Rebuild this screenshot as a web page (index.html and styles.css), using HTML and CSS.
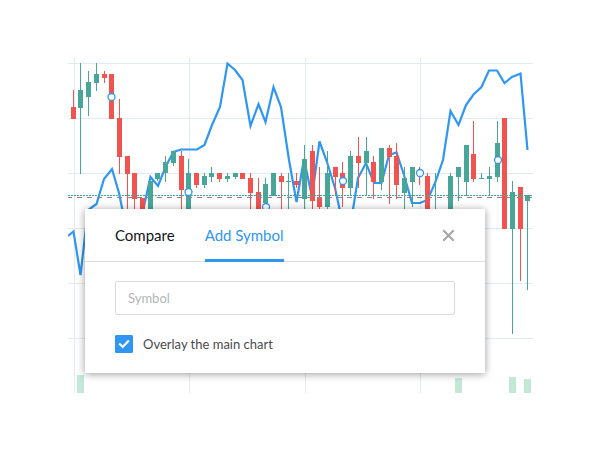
FILE: index.html
```
<!DOCTYPE html>
<html lang="en">
<head>
<meta charset="utf-8">
<meta name="viewport" content="width=device-width, initial-scale=1">
<title>Add Symbol</title>
<link rel="stylesheet" href="styles.css">
</head>
<body>
<main class="stage">
  <svg class="chart" viewBox="68 57 465 336" aria-hidden="true">
    <path class="grid" d="M68 63.5H533M68 118.5H533M68 173.5H533M68 228.5H533M68 283.5H533M68 338.5H533M74.5 58V393M189.5 58V393M305.5 58V393M420.5 58V393"/>
    <path class="volume" d="M77 375h7v18h-7zM455 378h7v15h-7zM509 377h7v16h-7zM524 379h7v14h-7z"/>
    <polyline class="compare-line" points="68,236 73.5,231.5 80.5,275 88,210 96.5,204 104,179 112,169 119,193 127,232 142,215 150.5,177 158,186 166,166 173.5,152 181,149.5 197,149.5 204.5,145 212,125 220,107 227.5,63.5 235,70 242.5,80 250.5,126 258.5,104 265.5,122 273.5,87 281,107 289,160 296.5,202 304,159 312,197 319.5,141.5 327,162 335,188 343,225 350.5,225 358,178 366,163 374,183 381.5,183 389,155 396.5,152.5 404,175 412,203 420,203 427.5,200 435,183 443,160 450.5,111 458.5,125 466,105 473.5,94.5 481.5,87 489,70.5 497,70.5 504.5,83 512,77 520.5,73.5 527.5,150"/>
    <g id="candles"></g>
    <path class="price-dots" d="M68 195.5H533"/>
    <path class="price-dashes" d="M67 197.5H533"/>
    <g class="markers">
      <circle cx="111.5" cy="97" r="3.5"/>
      <circle cx="188.5" cy="192" r="3.5"/>
      <circle cx="266" cy="207" r="3.5"/>
      <circle cx="343" cy="181" r="3.5"/>
      <circle cx="420" cy="173" r="3.5"/>
      <circle cx="498" cy="160" r="3.5"/>
    </g>
  </svg>

  <section class="dialog" role="dialog" aria-label="Add Symbol">
    <header class="dialog-header">
      <nav class="tabs">
        <button class="tab" type="button">Compare</button>
        <button class="tab tab-active" type="button">Add Symbol</button>
      </nav>
      <button class="close" type="button" aria-label="Close">
        <svg width="13" height="13" viewBox="0 0 13 13"><path d="M1.2 1.2l10.6 10.6M11.8 1.2L1.2 11.8"/></svg>
      </button>
    </header>
    <form class="dialog-body">
      <input class="symbol-input" type="text" placeholder="Symbol" aria-label="Symbol">
      <label class="option">
        <input class="checkbox" type="checkbox" checked>
        <svg class="tick" width="18" height="18" viewBox="0 0 18 18"><path d="M4.2 8.5l3.5 3.5 6.2-6.5"/></svg>
        <span>Overlay the main chart</span>
      </label>
    </form>
  </section>
</main>
<script src="chart.js"></script>
</body>
</html>
```
FILE: styles.css
```
* {
  box-sizing: border-box;
}

body {
  margin: 0;
  background: #fff;
  font-family: Lato, "Noto Sans", sans-serif;
}

.stage {
  position: relative;
  padding: 57px 67px 57px 68px;
}

.chart {
  display: block;
  width: 100%;
}

.grid {
  stroke: #e1ecf2;
  fill: none;
}

.volume {
  fill: #c3e8d6;
}

.compare-line {
  fill: none;
  stroke: #2f96f3;
  stroke-width: 2.2;
}

.up {
  fill: #48a699;
}

.down {
  fill: #f05350;
}

.price-dots {
  stroke: #48a699;
  stroke-dasharray: 2 1;
}

.price-dashes {
  stroke: #7b8a94;
  stroke-dasharray: 5 5;
}

.markers circle {
  fill: #fff;
  stroke: #2f96f3;
  stroke-width: 1.3;
}

.dialog {
  position: absolute;
  top: 209px;
  left: 85px;
  right: 115px;
  background: #fff;
  box-shadow: 0 1px 8px rgba(0, 0, 0, 0.4);
}

.dialog-header {
  display: flex;
  align-items: center;
  justify-content: space-between;
  height: 53px;
  padding: 0 30px;
  border-bottom: 1px solid #dadddf;
}

.tabs {
  display: flex;
  gap: 30px;
  height: 53px;
}

.tab {
  padding: 2px 0 0;
  border: 0;
  border-bottom: 3px solid transparent;
  background: none;
  color: #131722;
  font: 15px/24px Lato, "Noto Sans", sans-serif;
}

.tab-active {
  border-color: #2f96f3;
  color: #2f96f3;
}

.close {
  display: flex;
  padding: 0;
  border: 0;
  background: none;
}

.close path {
  fill: none;
  stroke: #a3a6a8;
  stroke-width: 2;
}

.dialog-body {
  display: grid;
  gap: 20px;
  padding: 19px 30px 20px;
}

.symbol-input {
  width: 100%;
  height: 34px;
  padding: 0 12px;
  border: 1px solid #d8dcde;
  border-radius: 2px;
  background: #fff;
  color: #4a4a4a;
  font: 13px/20px Lato, "Noto Sans", sans-serif;
}

.symbol-input::placeholder {
  color: #b2b5b8;
}

.option {
  position: relative;
  display: flex;
  align-items: center;
  gap: 10px;
  color: #4a4a4a;
  font-size: 13px;
  line-height: 18px;
}

.checkbox {
  appearance: none;
  width: 18px;
  height: 18px;
  margin: 0;
  border: 1px solid #d8dcde;
  border-radius: 1px;
}

.checkbox:checked {
  border-color: #2f96f3;
  background: #2f96f3;
}

.tick {
  position: absolute;
  left: 0;
  top: 0;
  pointer-events: none;
}

.tick path {
  fill: none;
  stroke: #fff;
  stroke-width: 2.2;
}
```
FILE: chart.js
```
// Each candle: wick x, high, body top, body bottom, low, direction.
const candles = [
  [73, 90, 107, 119, 119, "down"], [80, 63, 90, 108, 174, "up"],
  [88, 71, 82, 97, 116, "up"], [96, 63, 74, 83, 91, "up"],
  [104, 71, 74, 78, 83, "down"], [111, 74, 74, 119, 119, "down"],
  [119, 99, 118, 157, 174, "down"], [127, 156, 156, 174, 212, "down"],
  [134, 173, 173, 199, 212, "down"], [142, 198, 198, 212, 212, "down"],
  [150, 181, 181, 212, 212, "up"], [157, 173, 173, 179, 181, "up"],
  [165, 156, 162, 173, 182, "up"], [173, 151, 151, 163, 166, "up"],
  [181, 151, 156, 190, 212, "down"], [188, 159, 173, 212, 212, "up"],
  [196, 173, 173, 185, 188, "down"], [204, 173, 176, 185, 188, "up"],
  [211, 167, 173, 177, 182, "up"], [219, 173, 173, 179, 182, "down"],
  [227, 173, 176, 179, 182, "up"], [235, 173, 173, 177, 179, "up"],
  [242, 173, 173, 179, 179, "down"], [250, 173, 178, 193, 212, "down"],
  [258, 178, 192, 212, 212, "down"], [265, 178, 184, 203, 212, "up"],
  [273, 173, 173, 196, 196, "up"], [281, 173, 176, 182, 212, "down"],
  [288, 173, 181, 182, 212, "up"], [296, 173, 181, 185, 188, "down"],
  [304, 145, 159, 199, 212, "up"], [312, 145, 151, 201, 212, "down"],
  [319, 167, 198, 207, 212, "down"], [327, 151, 173, 207, 212, "up"],
  [335, 167, 167, 177, 196, "down"], [342, 162, 173, 188, 207, "down"],
  [350, 151, 156, 188, 196, "up"], [358, 137, 156, 163, 188, "down"],
  [366, 137, 151, 163, 196, "up"], [373, 156, 162, 182, 199, "down"],
  [381, 148, 148, 182, 190, "up"], [389, 145, 148, 157, 204, "down"],
  [396, 143, 156, 185, 199, "down"], [404, 167, 178, 193, 212, "up"],
  [412, 167, 167, 182, 207, "up"], [419, 167, 173, 174, 185, "down"],
  [427, 173, 176, 212, 212, "down"], [435, 173, 210, 212, 212, "up"],
  [450, 173, 176, 212, 212, "up"], [458, 167, 167, 177, 201, "up"],
  [466, 145, 145, 182, 196, "up"], [473, 121, 154, 179, 182, "down"],
  [481, 173, 178, 179, 179, "up"], [489, 167, 176, 179, 196, "up"],
  [497, 121, 143, 177, 182, "up"], [504, 118, 118, 229, 229, "down"],
  [512, 181, 192, 229, 334, "up"], [520, 187, 187, 229, 281, "down"],
  [527, 195, 195, 201, 290, "up"]
];

const layer = document.getElementById("candles");
for (const [x, high, top, bottom, low, direction] of candles) {
  const path = document.createElementNS("http://www.w3.org/2000/svg", "path");
  path.setAttribute("class", direction);
  path.setAttribute("d", `M${x} ${high}h1V${low}h-1zM${x - 2} ${top}h5V${bottom}h-5z`);
  layer.append(path);
}
```
